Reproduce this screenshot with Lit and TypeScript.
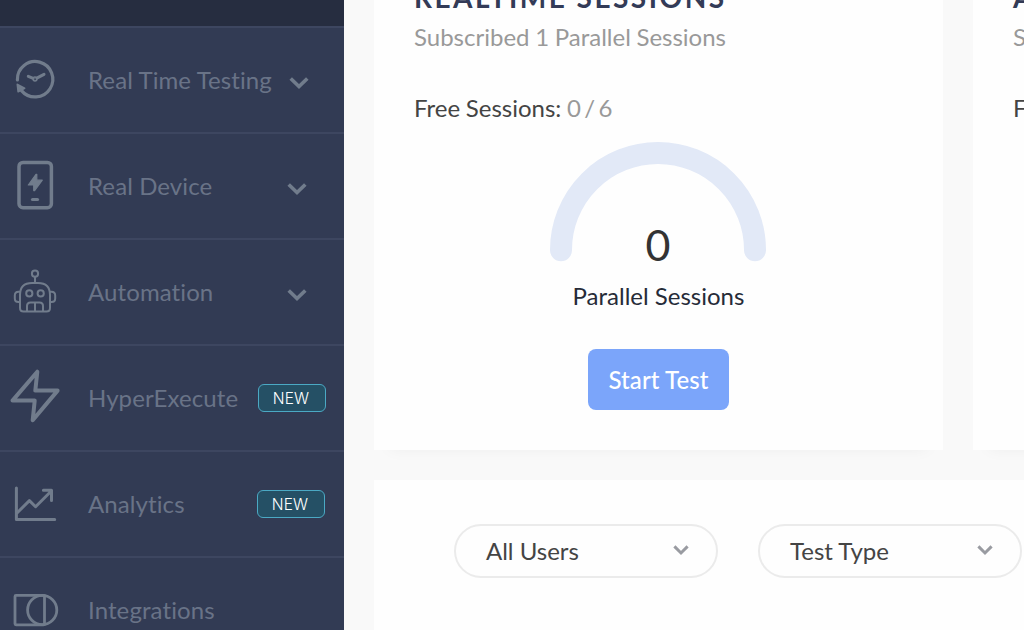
import { LitElement, html, css, svg, nothing } from "lit";
import { customElement, property } from "lit/decorators.js";

const icons = {
  clock: svg`<g stroke-width="3.2"><path d="M17.4 52A17.7 17.7 0 1 1 21.5 62.6"/><path d="M28.3 48.4L33.2 50.4M36.8 50.1L44 46.3" stroke-width="3"/><circle cx="35" cy="51" r="1.9" stroke-width="1.5"/><path class="fill" d="M17.4 56.5L24.6 60.2L18.2 63.6Z" stroke-width="1.8"/></g>`,
  device: svg`<rect x="19" y="28.4" width="32.4" height="45.3" rx="4" stroke-width="3.5"/><path class="fill" d="M36 40.3L28.3 51H33.7V56.6H34.6L42.3 46.2H36.8V40.3Z" stroke-width="1.2"/><path d="M32.5 65.5H37.5" stroke-width="3.2"/>`,
  robot: svg`<g stroke-width="2"><circle cx="35" cy="33.7" r="3.1"/><path d="M35 37V42.5M27 71.5H23.5Q20 71.5 20 68V55Q20 43 32 43H38Q50 43 50 55V68Q50 71.5 46.5 71.5H27V66Q27 62.5 30.5 62.5H39.5Q43 62.5 43 66V71.5M35 62.5V71.5M20 51.8H18.5Q14.8 51.8 14.8 55.5V58.5Q14.8 62 18.5 62H20M50 51.8H51.5Q55.2 51.8 55.2 55.5V58.5Q55.2 62 51.5 62H50"/><circle cx="29.3" cy="53.4" r="3.1"/><circle cx="40.7" cy="53.4" r="3.1"/></g>`,
  bolt: svg`<path d="M37.3 25.7L35.3 44.6H57.6L32.7 74.2L34.7 54.6H12.5Z" stroke-width="4"/>`,
  chart: svg`<g stroke-width="3"><path d="M16.4 36V67.6H54.7"/><path d="M17 61L29.4 48.6L35.6 54.7L51.3 39M43.4 38.3H51.5V48.4"/></g>`,
  shapes: svg`<g stroke-width="2.8"><rect x="15" y="37.4" width="29.5" height="29.4" rx="1"/><circle cx="42.2" cy="52" r="14.6"/></g>`,
};

type IconName = keyof typeof icons;

@customElement("nav-item")
class NavItem extends LitElement {
  @property() label = "";
  @property() icon: IconName = "clock";
  @property() extra = "";

  static styles = css`
    :host { display: flex; align-items: center; height: 104px; border-bottom: 2px solid #3d4660; }
    .icon { width: 88px; height: 104px; flex: none; fill: none; stroke: #717c8c; stroke-linecap: round; stroke-linejoin: round; }
    .icon .fill { fill: #717c8c; }
    .label { font-size: 24px; line-height: 30px; color: #697387; white-space: nowrap; flex: 1; font-variant-ligatures: none; letter-spacing: 0.1px; }
    .chev { flex: none; width: 20px; height: 14px; fill: none; stroke: #717c8c; stroke-width: 3.6; margin: 6px 37px 0 0; }
    .chev.near { margin-right: 35px; }
    .badge { box-sizing: border-box; width: 68px; height: 28px; border: 1px solid #4ba9c4; border-radius: 6px; background: #255065; color: #fff; font: 350 15.5px/27px Inter, sans-serif; letter-spacing: 0.2px; text-align: center; padding-right: 2px; margin-right: 18px; }
    .badge.inset { margin-right: 19px; }
  `;

  render() {
    const chevron = this.extra.startsWith("chevron");
    const badge = this.extra.startsWith("badge");
    return html`
      <svg class="icon" viewBox="0 0 88 104">${icons[this.icon]}</svg>
      <span class="label">${this.label}</span>
      ${chevron ? html`<svg class="chev ${this.extra.endsWith("near") ? "near" : ""}" viewBox="0 0 20 14"><path d="M1.7 2.5L10 10.6L18.3 2.5"/></svg>` : nothing}
      ${badge ? html`<span class="badge ${this.extra.endsWith("inset") ? "inset" : ""}">NEW</span>` : nothing}
    `;
  }
}

@customElement("pill-select")
class PillSelect extends LitElement {
  @property() label = "";

  static styles = css`
    :host { box-sizing: border-box; width: 264px; height: 54px; flex: none; display: flex; align-items: center; justify-content: space-between; border: 2px solid #ebebeb; border-radius: 27px; padding: 0 27px 0 30px; font-size: 24px; line-height: 30px; color: #444; }
    svg { width: 16px; height: 12px; fill: none; stroke: #999ba1; stroke-width: 3; margin: 0 0 2px 0; }
  `;

  render() {
    return html`<span>${this.label}</span><svg viewBox="0 0 16 12"><path d="M1.4 2.4L8 9L14.6 2.4"/></svg>`;
  }
}

@customElement("app-root")
class AppRoot extends LitElement {
  static styles = css`
    :host { display: flex; width: 1024px; height: 630px; overflow: hidden; background: #f9f9f9; font-family: Lato, sans-serif; }
    .side { width: 344px; flex: none; background: #323b54; height: 630px; overflow: hidden; }
    .top { height: 26px; background: #262d40; border-bottom: 2px solid #3d4660; }
    .main { flex: 1; min-width: 0; padding-left: 30px; overflow: hidden; }
    .cards { display: flex; gap: 30px; }
    .card { box-sizing: border-box; width: 569px; height: 450px; flex: none; background: #fefefe; padding: 0 40px; box-shadow: 0 14px 16px -16px rgba(0, 0, 0, 0.06); font-size: 24px; line-height: 30px; white-space: nowrap; }
    .title { margin: -18px 0 0; height: 30px; font-size: 28px; font-weight: 700; line-height: 30px; letter-spacing: 2.5px; color: #333b57; }
    .sub { margin-top: 10px; color: #999; word-spacing: -0.5px; }
    .free { margin-top: 41px; color: #444; word-spacing: -0.5px; }
    .free span { color: #999; word-spacing: -2.8px; }
    .meter { display: flex; flex-direction: column; align-items: center; margin-top: 19px; }
    .gauge { display: grid; width: 217px; height: 120px; }
    .gauge > * { grid-area: 1 / 1; }
    .gauge svg { fill: none; stroke: #e2e9f7; stroke-width: 22; stroke-linecap: round; }
    .count { align-self: end; text-align: center; font-size: 43px; line-height: 32px; color: #333; padding: 0 1px 1px 0; }
    .caption { margin-top: 19px; color: #262b38; }
    .start { font: 500 24px/61px Lato, sans-serif; letter-spacing: 0.1px; width: 141px; height: 61px; margin-top: 38px; padding: 0; border: 0; border-radius: 8px; background: #7ba5fa; color: #fff; }
    .filters { display: flex; gap: 40px; width: 700px; height: 150px; box-sizing: border-box; margin-top: 30px; padding: 44px 80px; background: #fefefe; }
  `;

  card(title: string) {
    return html`<section class="card">
      <h2 class="title">${title}</h2>
      <div class="sub">Subscribed 1 Parallel Sessions</div>
      <div class="free">Free Sessions: <span>0 / 6</span></div>
      <div class="meter">
        <div class="gauge">
          <svg width="216" height="120" viewBox="0 0 216 120"><path d="M11 108.2V108A97 97 0 0 1 205 108V108.2"/></svg>
          <div class="count">0</div>
        </div>
        <div class="caption">Parallel Sessions</div>
        <button class="start">Start Test</button>
      </div>
    </section>`;
  }

  render() {
    return html`
      <nav class="side">
        <div class="top"></div>
        <nav-item icon="clock" label="Real Time Testing" extra="chevron-near"></nav-item>
        <nav-item icon="device" label="Real Device" extra="chevron"></nav-item>
        <nav-item icon="robot" label="Automation" extra="chevron"></nav-item>
        <nav-item icon="bolt" label="HyperExecute" extra="badge"></nav-item>
        <nav-item icon="chart" label="Analytics" extra="badge-inset"></nav-item>
        <nav-item icon="shapes" label="Integrations"></nav-item>
      </nav>
      <main class="main">
        <div class="cards">${this.card("REALTIME SESSIONS")}${this.card("AUTOMATION SESSIONS")}</div>
        <div class="filters">
          <pill-select label="All Users"></pill-select>
          <pill-select label="Test Type"></pill-select>
        </div>
      </main>
    `;
  }
}
